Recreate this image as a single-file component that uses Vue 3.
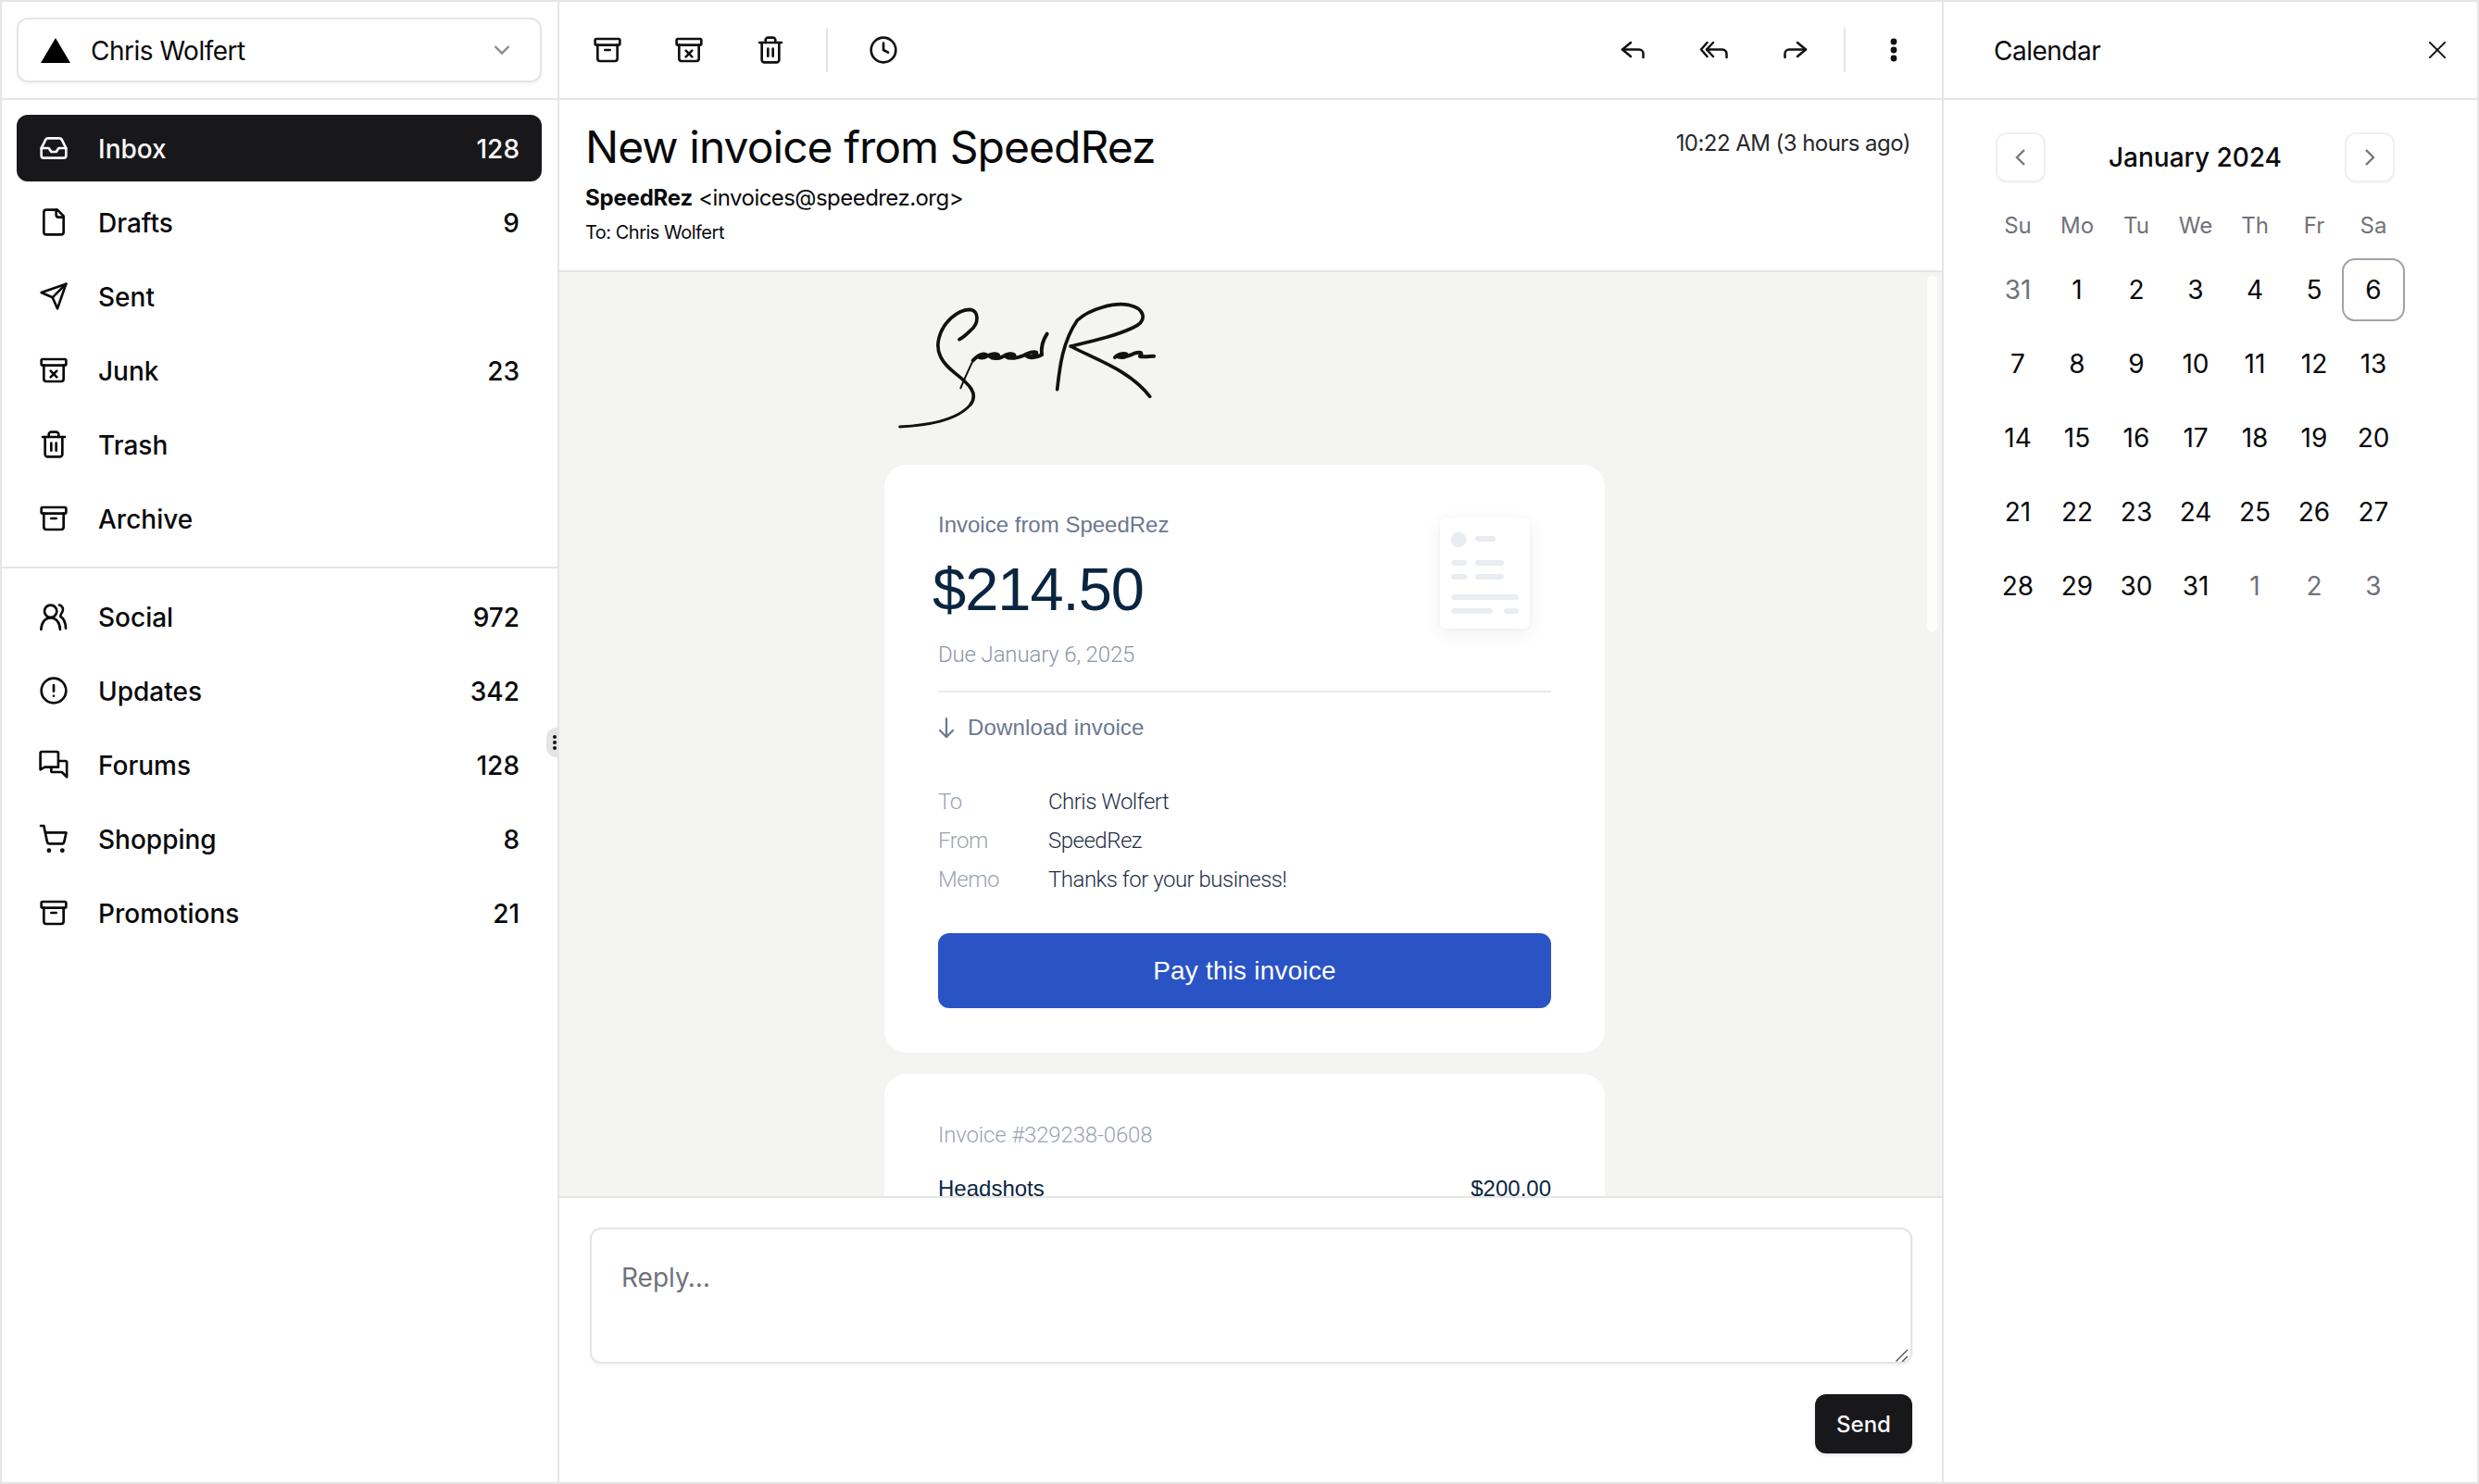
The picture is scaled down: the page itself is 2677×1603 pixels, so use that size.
<script setup>
const paths = {
  inbox: ['M22 12h-6l-2 3h-4l-2-3H2', 'M5.45 5.11 2 12v6a2 2 0 0 0 2 2h16a2 2 0 0 0 2-2v-6l-3.45-6.89A2 2 0 0 0 16.76 4H7.24a2 2 0 0 0-1.79 1.11z'],
  file: ['M15 2H6a2 2 0 0 0-2 2v16a2 2 0 0 0 2 2h12a2 2 0 0 0 2-2V7Z', 'M14 2v4a2 2 0 0 0 2 2h4'],
  send: ['m22 2-7 20-4-9-9-4Z', 'M22 2 11 13'],
  junk: ['M3 3h18a1 1 0 0 1 1 1v3a1 1 0 0 1-1 1H3a1 1 0 0 1-1-1V4a1 1 0 0 1 1-1Z', 'M4 8v11a2 2 0 0 0 2 2h12a2 2 0 0 0 2-2V8', 'm14.5 12.5-5 5', 'm9.5 12.5 5 5'],
  trash: ['M3 6h18', 'M19 6v14c0 1-1 2-2 2H7c-1 0-2-1-2-2V6', 'M8 6V4c0-1 1-2 2-2h4c1 0 2 1 2 2v2', 'M10 11v6', 'M14 11v6'],
  archive: ['M3 3h18a1 1 0 0 1 1 1v3a1 1 0 0 1-1 1H3a1 1 0 0 1-1-1V4a1 1 0 0 1 1-1Z', 'M4 8v11a2 2 0 0 0 2 2h12a2 2 0 0 0 2-2V8', 'M10 12h4'],
  users: ['M14.5 7.7a5 5 0 1 1-10 0 5 5 0 0 1 10 0Z', 'M1.8 22.5C2 17 5 13 9.5 13c4.5 0 7.5 4 7.7 9.5', 'M16.5 2.7c2.6.8 3.7 3 2.6 5.3-.7 1.5-1.9 2.6-1.6 4 2.5 1.3 4 5 4.3 9.5'],
  alert: ['M22 12a10 10 0 1 1-20 0 10 10 0 0 1 20 0Z', 'M12 7.5v5', 'M12 16.3h.01'],
  forums: ['M15.7 14V2.5a1 1 0 0 0-1-1H2.2a1 1 0 0 0-1 1V16l3.5-2h11Z', 'M16 9h5.6a1 1 0 0 1 1 1v12l-4-4H11a1 1 0 0 1-1-1v-2.800'],
  cart: ['M9 21.5a.8.8 0 1 1-1.600 0 .8.8 0 0 1 1.600 0Z', 'M19.800 21.500a.8.8 0 1 1-1.600 0 .8.8 0 0 1 1.600 0Z', 'M1.500 1.500h2.500l2.700 13a2 2 0 0 0 2 1.580h9.800a2 2 0 0 0 1.950-1.570l1.650-7.430H5.120'],
  clock: ['M22 12a10 10 0 1 1-20 0 10 10 0 0 1 20 0Z', 'M12 6.500V12l3.800 2']
}

const primaryNav = [
  { name: 'Inbox', icon: 'inbox', count: 128, active: true },
  { name: 'Drafts', icon: 'file', count: 9 },
  { name: 'Sent', icon: 'send' },
  { name: 'Junk', icon: 'junk', count: 23 },
  { name: 'Trash', icon: 'trash' },
  { name: 'Archive', icon: 'archive' }
]
const secondaryNav = [
  { name: 'Social', icon: 'users', count: 972 },
  { name: 'Updates', icon: 'alert', count: 342 },
  { name: 'Forums', icon: 'forums', count: 128 },
  { name: 'Shopping', icon: 'cart', count: 8 },
  { name: 'Promotions', icon: 'archive', count: 21 }
]
const weekdays = ['Su', 'Mo', 'Tu', 'We', 'Th', 'Fr', 'Sa']
const days = [
  { n: 31, muted: true }, { n: 1 }, { n: 2 }, { n: 3 }, { n: 4 }, { n: 5 }, { n: 6, selected: true },
  { n: 7 }, { n: 8 }, { n: 9 }, { n: 10 }, { n: 11 }, { n: 12 }, { n: 13 },
  { n: 14 }, { n: 15 }, { n: 16 }, { n: 17 }, { n: 18 }, { n: 19 }, { n: 20 },
  { n: 21 }, { n: 22 }, { n: 23 }, { n: 24 }, { n: 25 }, { n: 26 }, { n: 27 },
  { n: 28 }, { n: 29 }, { n: 30 }, { n: 31 }, { n: 1, muted: true }, { n: 2, muted: true }, { n: 3, muted: true }
]
const details = [
  { label: 'To', value: 'Chris Wolfert' },
  { label: 'From', value: 'SpeedRez' },
  { label: 'Memo', value: 'Thanks for your business!' }
]
</script>

<template>
  <div class="app">
    <aside class="sidebar">
      <div class="account-bar">
        <div class="account">
          <svg class="tri" viewBox="0 0 32 27"><path d="M16 0 32 27H0Z" fill="#000" /></svg>
          <span class="account-name">Chris Wolfert</span>
          <svg class="chev" viewBox="0 0 18 12"><path d="M1.500 2 9 9.500 16.500 2" /></svg>
        </div>
      </div>
      <nav class="nav">
        <a v-for="item in primaryNav" :key="item.name" class="nav-item" :class="{ active: item.active }">
          <svg class="icon" viewBox="0 0 24 24"><path v-for="d in paths[item.icon]" :key="d" :d="d" /></svg>
          <span class="nav-label">{{ item.name }}</span>
          <span v-if="item.count" class="nav-count">{{ item.count }}</span>
        </a>
      </nav>
      <nav class="nav nav-second">
        <a v-for="item in secondaryNav" :key="item.name" class="nav-item">
          <svg class="icon" viewBox="0 0 24 24"><path v-for="d in paths[item.icon]" :key="d" :d="d" /></svg>
          <span class="nav-label">{{ item.name }}</span>
          <span v-if="item.count" class="nav-count">{{ item.count }}</span>
        </a>
      </nav>
      <div class="grip"><i></i><i></i><i></i></div>
    </aside>

    <main class="mail">
      <header class="toolbar">
        <button class="tool"><svg class="icon" viewBox="0 0 24 24"><path v-for="d in paths.archive" :key="d" :d="d" /></svg></button>
        <button class="tool"><svg class="icon" viewBox="0 0 24 24"><path v-for="d in paths.junk" :key="d" :d="d" /></svg></button>
        <button class="tool"><svg class="icon" viewBox="0 0 24 24"><path v-for="d in paths.trash" :key="d" :d="d" /></svg></button>
        <span class="tool-sep left"></span>
        <button class="tool"><svg class="icon" viewBox="0 0 24 24"><path v-for="d in paths.clock" :key="d" :d="d" /></svg></button>
        <span class="spacer"></span>
        <button class="tool"><svg class="icon wide" viewBox="0 0 32 32"><path d="M14 8 5 15.500 14 23" /><path d="M5 15.500h18a4.500 4.500 0 0 1 4.500 4.500v4" /></svg></button>
        <button class="tool"><svg class="icon wide" viewBox="0 0 32 32"><path d="M8.500 8 2 15.500 8.500 23" /><path d="M15 8 8 15.500 15 23" /><path d="M8 15.500h17a4.500 4.500 0 0 1 4.500 4.500v4" /></svg></button>
        <button class="tool"><svg class="icon wide" viewBox="0 0 32 32"><path d="M18 8 27 15.500 18 23" /><path d="M27 15.500H9A4.500 4.500 0 0 0 4.500 20v4" /></svg></button>
        <span class="tool-sep right"></span>
        <button class="tool"><svg class="icon" viewBox="0 0 32 32"><circle cx="16" cy="7" r="3.400" class="dot" /><circle cx="16" cy="16" r="3.400" class="dot" /><circle cx="16" cy="25" r="3.400" class="dot" /></svg></button>
      </header>

      <section class="mail-head">
        <div class="mail-title-row">
          <h1 class="subject">New invoice from SpeedRez</h1>
          <span class="time">10:22 AM (3 hours ago)</span>
        </div>
        <div class="sender"><b>SpeedRez</b> &lt;invoices@speedrez.org&gt;</div>
        <div class="recipient">To: Chris Wolfert</div>
      </section>

      <section class="mail-body">
        <div class="thumb-scroll"></div>
        <div class="column">
          <svg class="signature" viewBox="0 0 1020 540">
            <path class="tail" d="M65 483C150 478 250 465 295 410" />
            <path d="M295 410C320 375 290 345 245 310C200 275 180 240 192 195C205 145 250 105 290 103C325 105 320 150 295 170C280 185 268 195 258 200" />
            <path class="thin" d="M262 358C275 325 290 295 302 268" />
            <path class="script" d="M302 268C318 252 335 244 345 250C348 258 332 262 322 258M340 258C356 246 378 244 384 250C386 258 370 262 358 256C366 264 385 262 398 256C412 246 430 244 436 250C438 258 422 262 410 256C420 264 450 260 466 252C482 242 500 238 508 242C508 254 488 258 476 254C484 262 510 258 525 250M525 250C522 225 530 200 542 182" />
            <path d="M575 362C582 300 590 210 640 138C680 100 760 80 805 88C860 100 870 140 820 162C760 190 690 205 618 222C700 265 810 300 875 385" />
            <path class="script" d="M762 258C775 244 798 244 802 250C802 258 784 260 772 256C790 260 812 252 828 244C842 240 852 242 845 252C836 258 860 256 888 254" />
          </svg>

          <article class="card card-main">
            <svg class="invoice-thumb" viewBox="0 0 97 120">
              <ellipse cx="20" cy="24" rx="8.500" ry="8.500" />
              <rect x="38" y="20" width="22" height="6" rx="3" />
              <rect x="12" y="46" width="17" height="6" rx="3" />
              <rect x="38" y="46" width="31" height="6" rx="3" />
              <rect x="12" y="61" width="17" height="6" rx="3" />
              <rect x="38" y="61" width="31" height="6" rx="3" />
              <rect x="12" y="83" width="73" height="6" rx="3" />
              <rect x="12" y="98" width="45" height="6" rx="3" />
              <rect x="69" y="98" width="16" height="6" rx="3" />
            </svg>
            <div class="invoice-from">Invoice from SpeedRez</div>
            <div class="amount">$214.50</div>
            <div class="due">Due January 6, 2025</div>
            <div class="divider"></div>
            <div class="download">
              <svg class="down" viewBox="0 0 18 24"><path d="M9 2v20" /><path d="M2 15l7 7 7-7" /></svg>
              <span>Download invoice</span>
            </div>
            <dl class="details">
              <div v-for="row in details" :key="row.label" class="detail-row">
                <dt>{{ row.label }}</dt>
                <dd>{{ row.value }}</dd>
              </div>
            </dl>
            <button class="pay">Pay this invoice</button>
          </article>

          <article class="card card-items">
            <div class="invoice-no">Invoice #329238-0608</div>
            <div class="item-row"><span>Headshots</span><span>$200.00</span></div>
          </article>
        </div>
      </section>

      <footer class="reply">
        <div class="reply-wrap">
          <textarea class="reply-box" placeholder="Reply…"></textarea>
          <svg class="resize-mark" viewBox="0 0 14 14"><path d="M13 1 0.500 13.500" /><path d="M13 8 7 14" /></svg>
        </div>
        <div class="reply-actions"><button class="send-btn">Send</button></div>
      </footer>
    </main>

    <aside class="calendar">
      <header class="cal-head">
        <span class="cal-title">Calendar</span>
        <svg class="close" viewBox="0 0 20 20"><path d="M1 1 19 19" /><path d="M19 1 1 19" /></svg>
      </header>
      <div class="cal-body">
        <div class="month-row">
          <button class="month-btn"><svg viewBox="0 0 12 20"><path d="M10 2 2 10l8 8" /></svg></button>
          <span class="month">January 2024</span>
          <button class="month-btn"><svg viewBox="0 0 12 20"><path d="M2 2l8 8-8 8" /></svg></button>
        </div>
        <div class="week">
          <span v-for="w in weekdays" :key="w">{{ w }}</span>
        </div>
        <div class="days">
          <span v-for="(d, i) in days" :key="i" class="day" :class="{ muted: d.muted, selected: d.selected }"><em>{{ d.n }}</em></span>
        </div>
      </div>
    </aside>
  </div>
</template>

<style>
html, body { margin: 0; background: #fff; }
</style>

<style scoped>
* { box-sizing: border-box; }
.app {
  width: 2677px; height: 1603px; display: flex; overflow: hidden;
  border: 2px solid #e5e5e5; background: #fff; color: #09090b;
  font-family: Inter, "Liberation Sans", sans-serif; font-size: 28px;
}
.sidebar { position: relative; width: 602px; flex: none; border-right: 2px solid #e5e5e5; }
.account-bar { height: 106px; padding: 17px 17px 0 16px; border-bottom: 2px solid #e5e5e5; }
.account {
  height: 70px; display: flex; align-items: center; padding: 0 16px 0 24px;
  border: 2px solid #e5e5e5; border-radius: 12px; box-shadow: 0 2px 4px rgba(0,0,0,.05);
}
.tri { width: 32px; height: 27px; flex: none; margin-right: 22px; }
.account-name { flex: 1; letter-spacing: -0.5px; padding-top: 2px; }
.chev { width: 18px; height: 12px; margin-right: 16px; fill: none; stroke: #8a8a8a; stroke-width: 2.400; }
.nav { display: flex; flex-direction: column; gap: 8px; padding: 16px 17px 16px 16px; }
.nav-second { border-top: 2px solid #e5e5e5; padding-top: 16px; }
.nav-item {
  height: 72px; display: flex; align-items: center; padding: 0 24px; border-radius: 12px; font-weight: 500;
}
.nav-item.active { background: #18181b; color: #fafafa; }
.icon { width: 32px; height: 32px; flex: none; fill: none; stroke: currentColor; stroke-width: 2; stroke-linecap: round; stroke-linejoin: round; }
.icon.wide { stroke-width: 2.500; }
.icon .dot { fill: currentColor; stroke: none; }
.nav-label { flex: 1; margin-left: 32px; padding-top: 1px; }
.nav-count { padding-top: 1px; }
.grip {
  position: absolute; top: 784px; right: -2px; width: 14px; height: 32px;
  display: flex; flex-direction: column; align-items: center; justify-content: center; gap: 2px;
  background: #e5e5e5; border-radius: 10px 0 0 10px;
}
.grip i { width: 4px; height: 4px; background: #111; border-radius: 50%; margin-left: 4px; }

.mail { width: 1495px; flex: none; display: flex; flex-direction: column; border-right: 2px solid #e5e5e5; }
.toolbar { height: 106px; flex: none; display: flex; align-items: center; gap: 8px; padding: 0 12px; border-bottom: 2px solid #e5e5e5; }
.tool { width: 80px; height: 72px; flex: none; display: flex; align-items: center; justify-content: center; padding: 0; border: 0; background: none; color: #111; }
.tool-sep { width: 2px; height: 48px; background: #e5e5e5; flex: none; }
.tool-sep.left { margin: 0 12px 0 12px; }
.tool-sep.right { margin: 0 4px 0 4px; }
.spacer { flex: 1; }

.mail-head { height: 186px; flex: none; padding: 0 34px 0 28px; border-bottom: 2px solid #e5e5e5; }
.mail-title-row { display: flex; justify-content: space-between; align-items: flex-start; padding-top: 25px; }
.subject { margin: 0; font-size: 48px; line-height: 52px; font-weight: 400; letter-spacing: -0.96px; }
.time { font-size: 24px; line-height: 32px; color: #27272a; margin-top: 6px; letter-spacing: -0.55px; }
.sender { font-size: 24px; line-height: 32px; margin-top: 13px; letter-spacing: -0.55px; }
.sender b { font-weight: 700; letter-spacing: -0.2px; }
.recipient { font-size: 20px; line-height: 28px; margin-top: 7px; letter-spacing: -0.5px; }

.mail-body { position: relative; flex: 1; min-height: 0; overflow: hidden; background: #f4f4f3; padding: 6px 0 0 351px; font-family: "Liberation Sans", Arial, sans-serif; }
.thumb-scroll { position: absolute; top: 4px; right: 5px; width: 11px; height: 385px; background: #fdfdfc; border-radius: 6px; }
.column { width: 778px; }
.signature { display: block; width: 340px; height: 180px; margin: 0 0 22px -5px; fill: none; stroke: #111; stroke-width: 11; stroke-linecap: round; stroke-linejoin: round; filter: blur(0.4px); }
.signature .thin { stroke-width: 6; }
.signature .tail { stroke-width: 9; }
.signature .script { stroke-width: 12; }
.card { position: relative; background: #fff; border-radius: 24px; padding: 0 58px; }
.card-main { padding-top: 49px; padding-bottom: 48px; margin-bottom: 23px; }
.card-items { padding-top: 50px; padding-bottom: 40px; }
.invoice-thumb { position: absolute; top: 57px; right: 81px; width: 97px; height: 120px; fill: #e9edf2; background: #fff; border-radius: 6px; box-shadow: 0 6px 20px rgba(50,60,90,.07), 0 1px 4px rgba(0,0,0,.04); }
.invoice-from { font-size: 24px; line-height: 32px; color: #6b7890; }
.amount { margin-top: 14px; margin-left: -6px; font-size: 65px; line-height: 80px; color: #0a2540; letter-spacing: -1px; }
.due { margin-top: 14px; font-family: Roboto, sans-serif; font-weight: 300; font-size: 24px; line-height: 32px; color: #8d96a6; letter-spacing: -0.15px; }
.divider { height: 2px; background: #e6eaef; margin-top: 23px; }
.download { display: flex; align-items: center; gap: 14px; margin-top: 22px; font-size: 24px; line-height: 32px; color: #6b7890; letter-spacing: 0.15px; }
.down { width: 18px; height: 24px; fill: none; stroke: #6b7890; stroke-width: 2.200; stroke-linecap: round; stroke-linejoin: round; }
.details { margin: 48px 0 0; display: flex; flex-direction: column; gap: 10px; font-family: Roboto, sans-serif; font-weight: 300; font-size: 24px; line-height: 32px; letter-spacing: -0.5px; }
.detail-row { display: flex; }
.detail-row dt { width: 119px; color: #9ba3b1; }
.detail-row dd { margin: 0; color: #1f2f4a; }
.pay { display: block; width: 100%; height: 81px; margin-top: 42px; border: 0; border-radius: 12px; background: #2a53c6; color: #fff; font-family: "Liberation Sans", Arial, sans-serif; font-size: 28px; letter-spacing: 0.2px; }
.invoice-no { font-family: Roboto, sans-serif; font-weight: 300; font-size: 24px; line-height: 32px; color: #9ba3b1; letter-spacing: -0.15px; }
.item-row { display: flex; justify-content: space-between; margin-top: 26px; font-size: 24px; line-height: 32px; color: #0a2540; }

.reply { height: 309px; flex: none; border-top: 2px solid #e5e5e5; padding: 32px 32px 31px 33px; display: flex; flex-direction: column; }
.reply-wrap { position: relative; height: 147px; flex: none; }
.reply-box { display: block; width: 100%; height: 147px; border: 2px solid #e5e5e5; border-radius: 12px; box-shadow: 0 2px 4px rgba(0,0,0,.05); padding: 32px; font-family: Inter, sans-serif; font-size: 28px; line-height: 40px; outline: none; background: #fff; resize: none; }
.reply-box::placeholder { color: #71717a; opacity: 1; }
.resize-mark { position: absolute; right: 4px; bottom: 2px; width: 14px; height: 14px; fill: none; stroke: #555; stroke-width: 1.400; }
.reply-actions { display: flex; justify-content: flex-end; margin-top: 33px; }
.send-btn { width: 105px; height: 64px; border: 0; border-radius: 12px; background: #18181b; color: #fafafa; font-family: Inter, sans-serif; font-size: 24px; font-weight: 500; box-shadow: 0 2px 4px rgba(0,0,0,.1); }

.calendar { flex: 1; min-width: 0; }
.cal-head { height: 106px; display: flex; align-items: center; justify-content: space-between; padding: 0 34px 0 54px; border-bottom: 2px solid #e5e5e5; }
.cal-title { letter-spacing: -0.5px; padding-top: 2px; }
.close { width: 18px; height: 18px; fill: none; stroke: #111; stroke-width: 2.200; stroke-linecap: round; }
.cal-body { padding: 35px 0 0 48px; }
.month-row { width: 431px; margin-left: 8px; height: 54px; display: flex; align-items: center; justify-content: space-between; }
.month { font-weight: 500; }
.month-btn { width: 54px; height: 54px; padding: 0; display: flex; align-items: center; justify-content: center; background: #fff; border: 2px solid #f0f0f0; border-radius: 12px; box-shadow: 0 1px 3px rgba(0,0,0,.04); }
.month-btn svg { width: 12px; height: 20px; fill: none; stroke: #777; stroke-width: 2.400; }
.week { display: grid; grid-template-columns: repeat(7, 64px); margin-top: 26px; height: 40px; align-items: center; text-align: center; font-size: 24px; color: #71717a; }
.days { display: grid; grid-template-columns: repeat(7, 64px); grid-auto-rows: 80px; margin-top: 10px; }
.day { display: flex; align-items: center; justify-content: center; }
.day em { font-style: normal; flex: none; width: 68px; height: 68px; display: flex; align-items: center; justify-content: center; border-radius: 14px; }
.day.muted { color: #71717a; }
.day.selected em { border: 2px solid #a1a1aa; }
</style>
